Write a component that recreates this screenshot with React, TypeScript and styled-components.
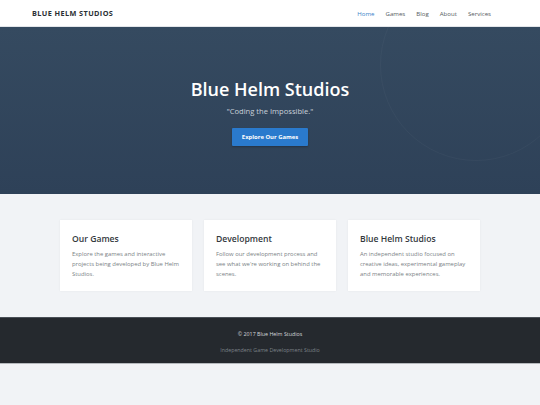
import React from 'react';
import styled, { createGlobalStyle } from 'styled-components';

const GlobalStyle = createGlobalStyle`
  html, body {
    margin: 0;
    padding: 0;
    background: #f1f3f6;
  }
  body {
    font-family: "Open Sans", "Liberation Sans", Arial, sans-serif;
    -webkit-font-smoothing: antialiased;
  }
  * { box-sizing: border-box; }
`;

const Page = styled.div`
  min-height: 405px;
  display: flex;
  flex-direction: column;
`;

const NavBar = styled.header`
  height: 27px;
  background: #ffffff;
  border-bottom: 1px solid #e3e6ea;
  display: flex;
  align-items: center;
  justify-content: space-between;
  padding: 0 49px 0 32px;
`;

const Brand = styled.div`
  font-size: 7.3px;
  font-weight: 700;
  letter-spacing: 0.4px;
  color: #2b2f33;
`;

const NavLinks = styled.nav`
  display: flex;
  gap: 11px;
`;

const NavLink = styled.a<{ $active?: boolean }>`
  font-size: 6.1px;
  color: ${p => (p.$active ? '#3b82c9' : '#555b61')};
  text-decoration: none;
`;

const Hero = styled.section`
  position: relative;
  overflow: hidden;
  height: 167px;
  background: linear-gradient(180deg, #354a60 0%, #2e4158 100%);
  display: flex;
  flex-direction: column;
  align-items: center;
  padding-top: 50px;

  &::after {
    content: '';
    position: absolute;
    left: 380px;
    top: -58px;
    width: 190px;
    height: 190px;
    border-radius: 50%;
    border: 1px solid rgba(255, 255, 255, 0.03);
  }
`;

const HeroTitle = styled.h1`
  margin: 0;
  font-size: 18px;
  font-weight: 600;
  color: #ffffff;
  line-height: 24px;
`;

const HeroTagline = styled.p`
  margin: 5px 0 0;
  font-size: 7.6px;
  color: #c9d1da;
`;

const HeroButton = styled.button`
  margin-top: 12px;
  width: 76px;
  height: 18px;
  border: none;
  border-radius: 1px;
  background: #2a7acd;
  color: #ffffff;
  font-family: inherit;
  font-size: 5.9px;
  font-weight: 700;
  box-shadow: 0 1px 2px rgba(0, 0, 0, 0.25);
`;

const Features = styled.section`
  background: #f1f3f6;
  padding: 26px 60px 26px;
  display: grid;
  grid-template-columns: repeat(3, 132px);
  gap: 12px;
  justify-content: center;
`;

const Card = styled.div`
  background: #ffffff;
  height: 71px;
  padding: 13px 12px 0 12px;
  box-shadow: 0 0 2px rgba(0, 0, 0, 0.06);
`;

const CardTitle = styled.h3`
  margin: 0;
  font-size: 8.6px;
  font-weight: 600;
  color: #33383d;
  line-height: 12px;
`;

const CardText = styled.p`
  margin: 4px 0 0;
  font-size: 5.9px;
  line-height: 10.2px;
  color: #7a7f85;
`;

const Footer = styled.footer`
  height: 47px;
  background: #25292e;
  border-top: 1px solid #4a5057;
  border-bottom: 1px solid #b5b9bd;
  display: flex;
  flex-direction: column;
  align-items: center;
  padding-top: 12px;
`;

const Copyright = styled.div`
  font-size: 5.3px;
  color: #d5d8db;
  line-height: 8px;
`;

const FooterNote = styled.div`
  margin-top: 8px;
  font-size: 5.3px;
  color: #7c8288;
  line-height: 8px;
`;

const Rest = styled.div`
  flex: 1;
  background: #f1f3f6;
`;

const cards = [
  {
    title: 'Our Games',
    text: 'Explore the games and interactive projects being developed by Blue Helm Studios.',
  },
  {
    title: 'Development',
    text: "Follow our development process and see what we're working on behind the scenes.",
  },
  {
    title: 'Blue Helm Studios',
    text: 'An independent studio focused on creative ideas, experimental gameplay and memorable experiences.',
  },
];

export default function App() {
  return (
    <Page>
      <GlobalStyle />
      <NavBar>
        <Brand>BLUE HELM STUDIOS</Brand>
        <NavLinks>
          <NavLink $active>Home</NavLink>
          <NavLink>Games</NavLink>
          <NavLink>Blog</NavLink>
          <NavLink>About</NavLink>
          <NavLink>Services</NavLink>
        </NavLinks>
      </NavBar>
      <Hero>
        <HeroTitle>Blue Helm Studios</HeroTitle>
        <HeroTagline>"Coding the Impossible."</HeroTagline>
        <HeroButton>Explore Our Games</HeroButton>
      </Hero>
      <Features>
        {cards.map(c => (
          <Card key={c.title}>
            <CardTitle>{c.title}</CardTitle>
            <CardText>{c.text}</CardText>
          </Card>
        ))}
      </Features>
      <Footer>
        <Copyright>© 2017 Blue Helm Studios</Copyright>
        <FooterNote>Independent Game Development Studio</FooterNote>
      </Footer>
      <Rest />
    </Page>
  );
}
